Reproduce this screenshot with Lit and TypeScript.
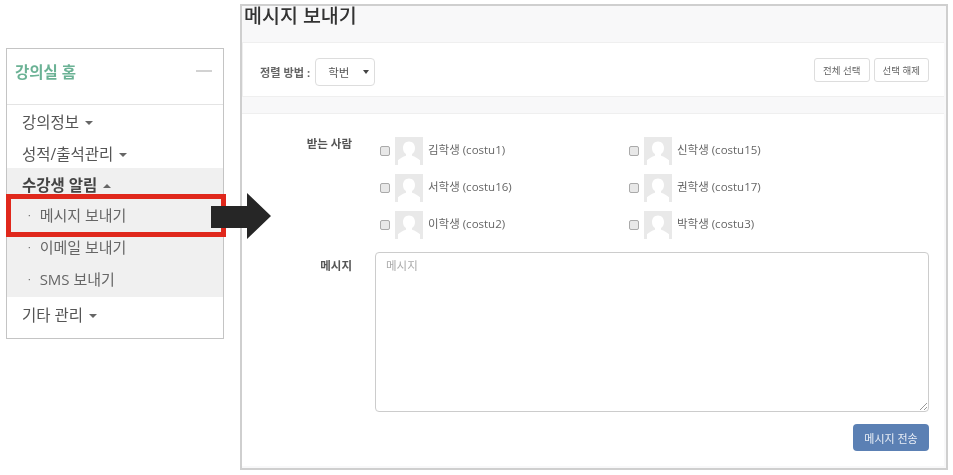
import { LitElement, html, css } from "lit";
import { customElement } from "lit/decorators.js";

const students = [
  ["김학생 (costu1)", "신학생 (costu15)"],
  ["서학생 (costu16)", "권학생 (costu17)"],
  ["이학생 (costu2)", "박학생 (costu3)"],
].flat();

const avatar = html`<svg class="avatar" viewBox="0 0 28 28" aria-hidden="true">
  <rect width="28" height="28" fill="#e9e9e9"></rect>
  <path d="M14 4.5c3.6 0 6 2.8 6 6.4 0 2.7-1.2 5-3 6.2v1.6c3 1 6.2 2.6 8 4.6V28H3v-4.7c1.8-2 5-3.600 8-4.600v-1.600c-1.800-1.200-3-3.500-3-6.200 0-3.600 2.400-6.400 6-6.400z" fill="#fff"></path>
</svg>`;

@customElement("app-root")
export class AppRoot extends LitElement {
  static styles = css`
    :host {
      display: block;
      width: 953px;
      height: 475px;
      overflow: hidden;
      background: #fff;
      font-family: "Open Sans", "Noto Sans CJK KR", sans-serif;
      color: #555;
    }
    .stage {
      position: relative;
      width: 953px;
      height: 475px;
      display: flex;
      align-items: flex-start;
      padding: 4px 0 0 6px;
      box-sizing: border-box;
      gap: 16px;
      filter: blur(0.4px);
    }
    .side {
      margin-top: 44px;
      width: 218px;
      height: 291px;
      box-sizing: border-box;
      border: 1px solid #c4c4c4;
      flex: none;
    }
    .side-head {
      height: 56px;
      box-sizing: border-box;
      border-bottom: 1px solid #e4e4e4;
      display: flex;
      align-items: center;
      justify-content: space-between;
      padding: 0 11px 11px 8px;
      font-size: 15.5px;
      font-weight: 700;
      color: #6bb295;
    }
    .dash {
      width: 16px;
      height: 2px;
      background: #d2d2d2;
    }
    .menu {
      font-size: 15.5px;
      line-height: 30px;
      color: #555;
    }
    .item {
      height: 32px;
      box-sizing: border-box;
      padding: 2px 0 0 15px;
      display: flex;
      align-items: center;
      gap: 6px;
    }
    .item.last {
      padding-top: 3px;
    }
    .group {
      background: #f0f0f0;
      margin-top: -1px;
      padding-bottom: 2px;
    }
    .group .item.open {
      height: 31px;
      font-weight: 700;
      color: #444;
    }
    .sub {
      height: 32px;
      padding-left: 21px;
      display: flex;
      align-items: center;
      gap: 9px;
      font-size: 15px;
      color: #666;
    }
    .dot {
      font-size: 10px;
      color: #666;
    }
    .caret {
      width: 0;
      height: 0;
      border-left: 4px solid transparent;
      border-right: 4px solid transparent;
      border-top: 4px solid #666;
      margin-top: 2px;
    }
    .caret.up {
      border-top: 0;
      border-bottom: 4px solid #666;
    }
    .win {
      width: 708px;
      height: 466px;
      box-sizing: border-box;
      flex: none;
      border: 2px solid #cfcfcf;
      background: #f8f8f9;
      padding: 0 2px 2px 0;
      display: flex;
      flex-direction: column;
    }
    h1 {
      margin: 0;
      height: 36px;
      padding-left: 2px;
      font-size: 19.5px;
      line-height: 20px;
      font-weight: 500;
      color: #333;
    }
    .bar {
      height: 55px;
      box-sizing: border-box;
      background: #fff;
      border: 1px solid #efefef;
      border-right: 0;
      display: flex;
      align-items: center;
      padding: 4px 15px 0 17px;
      font-size: 11.2px;
    }
    .sort {
      font-weight: 700;
      color: #666;
      margin-right: 5px;
    }
    .select {
      width: 60px;
      height: 28px;
      box-sizing: border-box;
      border: 1px solid #ddd;
      border-radius: 4px;
      display: flex;
      align-items: center;
      justify-content: space-between;
      padding: 0 5px 0 12px;
      font-size: 11.5px;
      color: #555;
    }
    .select i {
      border-left: 3px solid transparent;
      border-right: 3px solid transparent;
      border-top: 4px solid #444;
    }
    .spacer {
      flex: 1;
    }
    .btn {
      height: 24px;
      box-sizing: border-box;
      border: 1px solid #ddd;
      border-radius: 3px;
      background: #fff;
      display: flex;
      align-items: center;
      justify-content: center;
      font-size: 9.5px;
      color: #666;
      width: 55.5px;
      margin-left: 4px;
      margin-bottom: 4px;
    }
    .gap {
      height: 16px;
      flex: none;
    }
    .form {
      flex: 1;
      background: #fff;
      border-top: 1px solid #efefef;
      display: grid;
      grid-template-columns: 110px 554px;
      column-gap: 23px;
      padding-top: 23px;
      align-content: start;
    }
    .label {
      text-align: right;
      font-size: 11.5px;
      font-weight: 700;
      color: #555;
    }
    .to {
      line-height: 14px;
    }
    .people {
      display: grid;
      grid-template-columns: 249px 249px;
      grid-auto-rows: 28px;
      row-gap: 9px;
      padding-left: 5px;
      margin-bottom: 13px;
    }
    .person {
      display: flex;
      align-items: center;
      font-size: 11.5px;
      color: #666;
    }
    .check {
      width: 10px;
      height: 10px;
      border: 1px solid #aaa;
      border-radius: 2px;
      background: #e8e8e8;
      box-sizing: border-box;
      margin: -1px 5px 0 0;
    }
    .avatar {
      width: 28px;
      height: 28px;
      margin-right: 5px;
      flex: none;
    }
    .name {
      margin-top: -4px;
    }
    .msg-label {
      padding-top: 7px;
      line-height: 14px;
    }
    .area {
      position: relative;
      height: 160px;
      box-sizing: border-box;
      border: 1px solid #ccc;
      border-radius: 4px;
      padding: 5px 10px;
      font-size: 11.5px;
      line-height: 15px;
      color: #aaa;
    }
    .grip {
      position: absolute;
      right: 1px;
      bottom: 1px;
      width: 8px;
      height: 8px;
    }
    .send {
      grid-column: 2;
      justify-self: end;
      margin-top: 12px;
      width: 76px;
      height: 27px;
      border-radius: 4px;
      background: #5b80b4;
      color: #e9eef6;
      font-size: 11px;
      display: flex;
      align-items: center;
      justify-content: center;
    }
    .red {
      position: absolute;
      left: 6px;
      top: 194px;
      width: 220px;
      height: 43px;
      box-sizing: border-box;
      border: 5px solid #e0281c;
    }
    .arrow {
      position: absolute;
      left: 211px;
      top: 193px;
      width: 60px;
      height: 46px;
    }
  `;

  render() {
    return html`<div class="stage">
      <aside class="side">
        <div class="side-head"><span>강의실 홈</span><span class="dash"></span></div>
        <div class="menu">
          <div class="item"><span>강의정보</span><span class="caret"></span></div>
          <div class="item"><span>성적/출석관리</span><span class="caret"></span></div>
          <div class="group">
            <div class="item open"><span>수강생 알림</span><span class="caret up"></span></div>
            <div class="sub"><span class="dot">·</span><span>메시지 보내기</span></div>
            <div class="sub"><span class="dot">·</span><span>이메일 보내기</span></div>
            <div class="sub"><span class="dot">·</span><span>SMS 보내기</span></div>
          </div>
          <div class="item last"><span>기타 관리</span><span class="caret"></span></div>
        </div>
      </aside>
      <main class="win">
        <h1>메시지 보내기</h1>
        <div class="bar">
          <span class="sort">정렬 방법 :</span>
          <div class="select"><span>학번</span><i></i></div>
          <span class="spacer"></span>
          <div class="btn">전체 선택</div>
          <div class="btn">선택 해제</div>
        </div>
        <div class="gap"></div>
        <div class="form">
          <div class="label to">받는 사람</div>
          <div class="people">
            ${students.map(
              (s) => html`<div class="person"><span class="check"></span>${avatar}<span class="name">${s}</span></div>`
            )}
          </div>
          <div class="label msg-label">메시지</div>
          <div class="area">
            메시지
            <svg class="grip" viewBox="0 0 8 8" aria-hidden="true">
              <path d="M1 8 8 1M5 8l3-3" stroke="#999" fill="none"></path>
            </svg>
          </div>
          <div class="send">메시지 전송</div>
        </div>
      </main>
      <div class="red"></div>
      <svg class="arrow" viewBox="0 0 60 46" aria-hidden="true">
        <path d="M0 13h36V0l24 23-24 23V35H0z" fill="#262626"></path>
      </svg>
    </div>`;
  }
}
